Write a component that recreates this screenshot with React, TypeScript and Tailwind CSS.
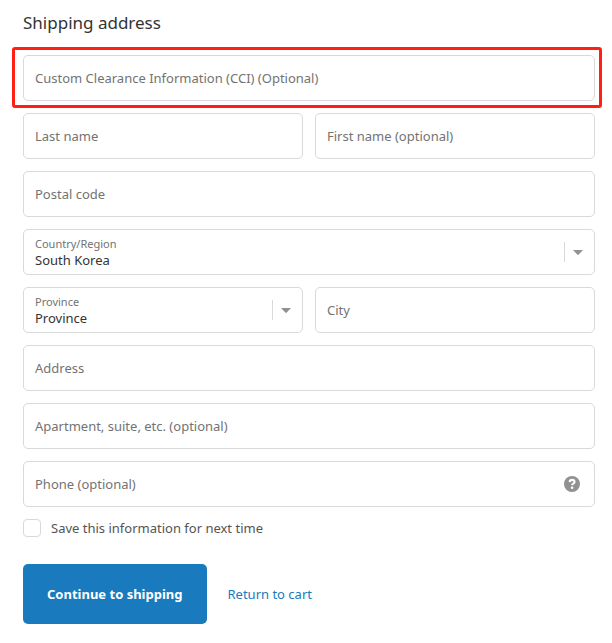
import type { ReactNode } from 'react';

type FieldProps = {
  id: string;
  label: string;
  type?: string;
  children?: ReactNode;
};

function TextField({ id, label, type = 'text', children }: FieldProps) {
  return (
    <div className="grid h-[46px] min-w-0 items-center">
      <input
        id={id}
        type={type}
        className="col-start-1 row-start-1 h-full w-full min-w-0 rounded-[5px] border border-[#d9d9d9] bg-white px-[11px] text-[13px] text-[#333333] outline-none focus:border-[#197bbd]"
      />
      <label
        htmlFor={id}
        className="pointer-events-none col-start-1 row-start-1 truncate px-3 text-[13px] leading-5 text-[#737373]"
      >
        {label}
      </label>
      {children}
    </div>
  );
}

type SelectProps = {
  id: string;
  label: string;
  options: string[];
};

function SelectField({ id, label, options }: SelectProps) {
  return (
    <div className="grid h-[46px] min-w-0">
      <select
        id={id}
        className="col-start-1 row-start-1 h-full w-full min-w-0 appearance-none rounded-[5px] border border-[#d9d9d9] bg-white pt-[18px] pr-10 pb-0 pl-[11px] text-[13px] text-[#333333] outline-none focus:border-[#197bbd]"
      >
        {options.map((option) => (
          <option key={option}>{option}</option>
        ))}
      </select>
      <label
        htmlFor={id}
        className="pointer-events-none col-start-1 row-start-1 self-start px-3 pt-[7px] text-[11px] leading-4 text-[#737373]"
      >
        {label}
      </label>
      <span className="pointer-events-none col-start-1 row-start-1 flex h-5 w-[31px] items-center self-center justify-self-end border-l border-[#d9d9d9] pl-2">
        <svg width="10" height="5" viewBox="0 0 10 5" fill="#919191" aria-hidden="true">
          <path d="M0 0h10L5.7 4.6a1 1 0 0 1-1.4 0z" />
        </svg>
      </span>
    </div>
  );
}

function HelpIcon() {
  return (
    <svg width="16" height="16" viewBox="0 0 16 16" aria-hidden="true">
      <circle cx="8" cy="8" r="8" fill="#919191" />
      <path
        d="M5.6 6.1C5.7 4.7 6.7 3.9 8.1 3.9c1.4 0 2.4.8 2.4 2 0 .9-.5 1.4-1.2 1.8-.8.5-1.1.8-1.1 1.6"
        fill="none"
        stroke="#ffffff"
        strokeWidth="2.1"
      />
      <circle cx="8.1" cy="11.7" r="1.3" fill="#ffffff" />
    </svg>
  );
}

export default function App() {
  return (
    <main className="bg-white pt-[11px] pr-[17px] pb-5 pl-[23px] font-['Noto_Sans','Open_Sans',sans-serif] text-[#333333]">
      <form onSubmit={(event) => event.preventDefault()}>
        <h2 className="mb-5 text-[17px] leading-6">Shipping address</h2>

        <div className="grid gap-3">
          <div className="relative">
            <TextField id="cci" label="Custom Clearance Information (CCI) (Optional)" />
            <div className="pointer-events-none absolute -top-2 -right-[7px] -bottom-[7px] -left-[11px] rounded-[3px] border-3 border-[#ff1f14]" />
          </div>
          <div className="grid grid-cols-2 gap-3">
            <TextField id="last-name" label="Last name" />
            <TextField id="first-name" label="First name (optional)" />
          </div>
          <TextField id="postal-code" label="Postal code" />
          <SelectField id="country" label="Country/Region" options={['South Korea']} />
          <div className="grid grid-cols-2 gap-3">
            <SelectField id="province" label="Province" options={['Province']} />
            <TextField id="city" label="City" />
          </div>
          <TextField id="address" label="Address" />
          <TextField id="apartment" label="Apartment, suite, etc. (optional)" />
          <TextField id="phone" label="Phone (optional)" type="tel">
            <button
              type="button"
              aria-label="Phone number help"
              className="col-start-1 row-start-1 mr-[15px] justify-self-end"
            >
              <HelpIcon />
            </button>
          </TextField>

          <div className="flex h-[18px] items-center gap-[10px]">
            <input
              id="remember"
              type="checkbox"
              className="size-[18px] appearance-none rounded-[4px] border border-[#d9d9d9] bg-white checked:border-[#197bbd] checked:bg-[#197bbd]"
            />
            <label htmlFor="remember" className="text-[13px] leading-5 text-[#545454]">
              Save this information for next time
            </label>
          </div>
        </div>

        <div className="mt-[27px] flex items-center gap-[21px]">
          <button
            type="submit"
            className="rounded-[5px] bg-[#197bbd] px-6 py-5 text-[13px] leading-5 font-bold text-white"
          >
            Continue to shipping
          </button>
          <a href="#cart" className="text-[13px] leading-5 text-[#197bbd]">
            Return to cart
          </a>
        </div>
      </form>
    </main>
  );
}
